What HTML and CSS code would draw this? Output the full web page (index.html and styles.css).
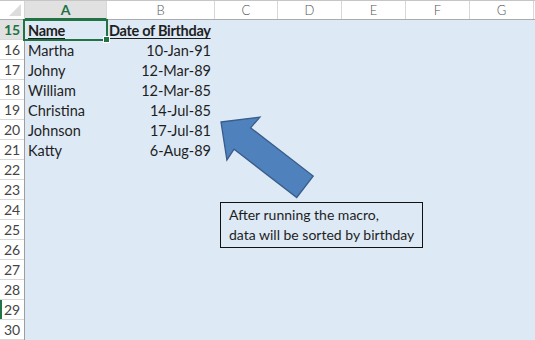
FILE: index.html
```html
<!DOCTYPE html>
<html>
<head>
<meta charset="utf-8">
<link rel="stylesheet" href="styles.css">
</head>
<body>
<div class="sheet">
  <div class="head-row">
    <div class="corner"><span class="tri"></span></div>
    <div class="col-h sel c-a">A</div>
    <div class="col-h c-b">B</div>
    <div class="col-h c-c">C</div>
    <div class="col-h c-d">D</div>
    <div class="col-h c-e">E</div>
    <div class="col-h c-f">F</div>
    <div class="col-h c-g">G</div>
  </div>
  <div class="body">
    <div class="row-heads">
      <div class="row-h sel">15</div>
      <div class="row-h">16</div>
      <div class="row-h">17</div>
      <div class="row-h">18</div>
      <div class="row-h">19</div>
      <div class="row-h">20</div>
      <div class="row-h">21</div>
      <div class="row-h">22</div>
      <div class="row-h">23</div>
      <div class="row-h">24</div>
      <div class="row-h">25</div>
      <div class="row-h">26</div>
      <div class="row-h">27</div>
      <div class="row-h">28</div>
      <div class="row-h mark">29</div>
      <div class="row-h">30</div>
    </div>
    <div class="cells">
      <div class="cell a active"><span class="hdr">Name</span></div>
      <div class="cell b"><span class="hdr">Date of Birthday</span></div>
      <div class="cell a">Martha</div><div class="cell b num">10-Jan-91</div>
      <div class="cell a">Johny</div><div class="cell b num">12-Mar-89</div>
      <div class="cell a">William</div><div class="cell b num">12-Mar-85</div>
      <div class="cell a">Christina</div><div class="cell b num">14-Jul-85</div>
      <div class="cell a">Johnson</div><div class="cell b num">17-Jul-81</div>
      <div class="cell a">Katty</div><div class="cell b num">6-Aug-89</div>

      <svg class="arrow" width="510" height="320" viewBox="25 20 510 320">
        <polygon points="221,122 259.9,117.1 250.6,127.8 313.2,176.1 296.7,197.5 234.1,149.2 226.9,159.9" fill="#4f81bd" stroke="#385d8a" stroke-width="1.3" stroke-linejoin="miter"/>
      </svg>
      <div class="note">After running the macro,<br>data will be sorted by birthday</div>
    </div>
  </div>
</div>
</body>
</html>
```
FILE: styles.css
```css
* { box-sizing: border-box; }
html, body { margin: 0; padding: 0; }
body {
  width: 535px;
  height: 340px;
  overflow: hidden;
  background: #dde9f5;
  font-family: Lato, "Liberation Sans", sans-serif;
}
.sheet {
  display: flex;
  flex-direction: column;
  width: 535px;
  height: 340px;
}
.head-row {
  display: flex;
  height: 20px;
  background: #fff;
  border-top: 1px solid #c6c6c6;
  border-bottom: 1px solid #ababab;
}
.corner {
  width: 25px;
  position: relative;
  border-right: 1px solid #d4d4d4;
}
.tri {
  position: absolute;
  right: 3px;
  bottom: 3px;
  width: 0;
  height: 0;
  border-left: 12px solid transparent;
  border-bottom: 12px solid #dcdcdc;
}
.col-h {
  display: flex;
  align-items: center;
  justify-content: center;
  border-right: 1px solid #d8d8d8;
  color: #555;
  font-size: 13px;
  font-weight: 300;
}
.col-h.sel {
  background: #e1e1e1;
  color: #217346;
  font-weight: 700;
  font-size: 14px;
  border-bottom: 2px solid #217346;
  margin-bottom: -1px;
}
.c-a { width: 82px; }
.c-b { width: 108px; }
.c-c { width: 63px; }
.c-d { width: 64px; }
.c-e { width: 64px; }
.c-f { width: 64px; }
.c-g { width: 64px; }

.body {
  display: flex;
  flex: 1;
}
.row-heads {
  display: flex;
  flex-direction: column;
  width: 25px;
  background: #fff;
  border-right: 1px solid #9e9e9e;
}
.row-h {
  height: 20px;
  border-bottom: 1px solid #d8d8d8;
  display: flex;
  align-items: center;
  justify-content: center;
  font-size: 14px;
  color: #444;
}
.row-h.sel {
  background: #e1e1e1;
  color: #217346;
  font-weight: 700;
}
.row-h.mark {
  box-shadow: inset 2px 0 0 #217346;
}
.cells {
  position: relative;
  flex: 1;
  display: grid;
  grid-template-columns: 82px 108px;
  grid-auto-rows: 20px;
  align-content: start;
  font-size: 14.5px;
  color: #1e1e1e;
}
.cell {
  display: flex;
  align-items: center;
  white-space: nowrap;
  padding-top: 1px;
}
.cell.a { padding-left: 3px; }
.cell.b { padding-left: 2px; }
.cell.num { justify-content: flex-end; padding-right: 4px; }
.hdr {
  font-weight: 700;
  text-decoration: underline;
  text-underline-offset: 2px;
  letter-spacing: -0.3px;
}
.cell.active {
  position: relative;
  outline: 2px solid #217346;
  outline-offset: -1px;
  margin-left: -1px;
  padding-left: 4px;
}
.cell.active::after {
  content: "";
  position: absolute;
  right: -3px;
  bottom: -3px;
  width: 5px;
  height: 5px;
  background: #217346;
  border: 1px solid #fff;
}
.arrow {
  position: absolute;
  left: 0;
  top: 0;
}
.note {
  position: absolute;
  left: 195px;
  top: 182px;
  width: 203px;
  height: 46px;
  border: 1px solid #111;
  background: #dde9f5;
  padding: 2px 0 0 8px;
  font-size: 14px;
  line-height: 20px;
  color: #1e1e1e;
}
```
